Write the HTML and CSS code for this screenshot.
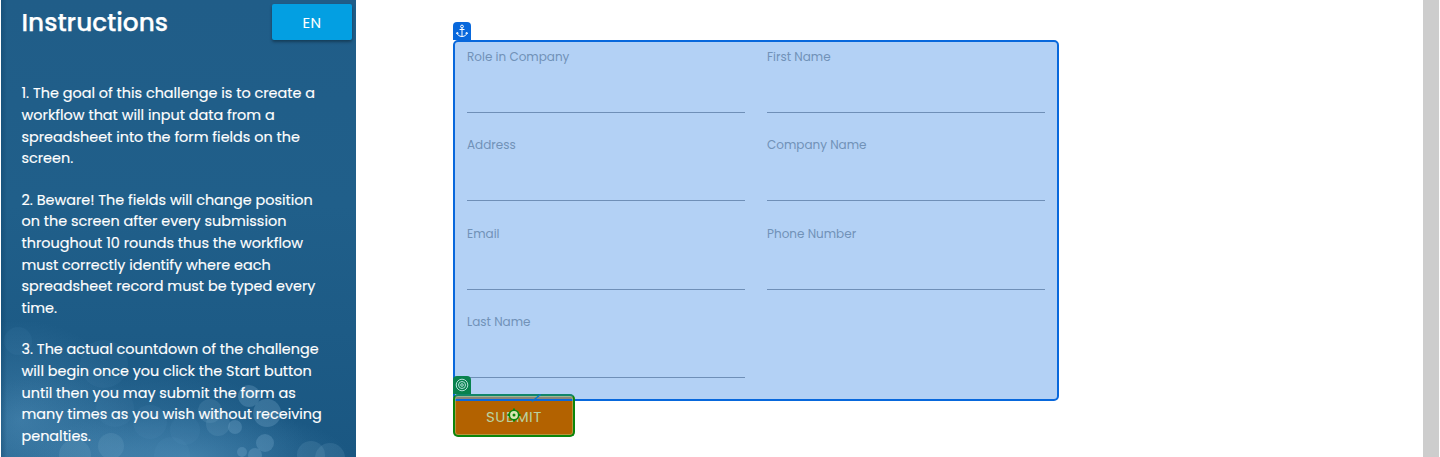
FILE: index.html
```html
<!DOCTYPE html>
<html lang="en">
<head>
<meta charset="utf-8">
<title>Challenge</title>
<link rel="stylesheet" href="styles.css">
</head>
<body>
<div class="page">
  <aside class="side">
    <svg class="bokeh" width="355" height="457" viewBox="1 0 355 457" aria-hidden="true">
      <defs>
        <radialGradient id="glow"><stop offset="0" stop-color="#5b9ac4" stop-opacity=".45"/><stop offset=".5" stop-color="#5292bd" stop-opacity=".24"/><stop offset="1" stop-color="#5292bd" stop-opacity="0"/></radialGradient>
        <linearGradient id="edge"><stop offset="0" stop-color="#0b3d63" stop-opacity=".35"/><stop offset="1" stop-color="#0b3d63" stop-opacity="0"/></linearGradient>
      </defs>
      <ellipse cx="20" cy="420" rx="110" ry="100" fill="url(#glow)"/>
      <ellipse cx="120" cy="455" rx="190" ry="90" fill="url(#glow)"/>
      <ellipse cx="190" cy="458" rx="160" ry="50" fill="url(#glow)"/>
      <g fill="#74acd0" fill-opacity=".07">
        <circle cx="18" cy="341" r="14"/><circle cx="104" cy="364" r="24"/><circle cx="115" cy="408" r="19"/>
        <circle cx="150" cy="422" r="17"/><circle cx="185" cy="430" r="15"/><circle cx="172" cy="455" r="18"/>
      </g>
      <g fill="#8dbada" fill-opacity=".15">
        <circle cx="210" cy="411" r="12"/><circle cx="218" cy="424" r="12"/><circle cx="75" cy="455" r="16"/>
        <circle cx="111" cy="446" r="13"/><circle cx="311" cy="455" r="14"/><circle cx="330" cy="458" r="15"/>
      </g>
      <g fill="#8dbada" fill-opacity=".25">
        <circle cx="249" cy="396" r="11"/><circle cx="267" cy="413" r="14"/><circle cx="235" cy="427" r="7"/>
        <circle cx="265" cy="443" r="9"/><circle cx="242" cy="452" r="5"/><circle cx="255" cy="455" r="7"/>
      </g>
      <rect x="1" width="6" height="457" fill="url(#edge)"/>
    </svg>
    <div class="side-body">
      <header class="side-head">
        <h1>Instructions</h1>
        <button class="lang">EN</button>
      </header>
      <div class="steps">
        <p>1. The goal of this challenge is to create a<br>workflow that will input data from a<br>spreadsheet into the form fields on the<br>screen.</p>
        <p>2. Beware! The fields will change position<br>on the screen after every submission<br>throughout 10 rounds thus the workflow<br>must correctly identify where each<br>spreadsheet record must be typed every<br>time.</p>
        <p>3. The actual countdown of the challenge<br>will begin once you click the Start button<br>until then you may submit the form as<br>many times as you wish without receiving<br>penalties.</p>
      </div>
    </div>
  </aside>
  <main class="content">
    <div class="form-wrap">
      <form class="form">
        <label class="field">Role in Company</label><label class="field">First Name</label>
        <label class="field">Address</label><label class="field">Company Name</label>
        <label class="field">Email</label><label class="field">Phone Number</label>
        <label class="field">Last Name</label>
      </form>
      <div class="submit">SUBMIT</div>
      <span class="tag anchor"><svg width="18" height="18" viewBox="0 0 18 18" fill="none" stroke="#fff"><circle cx="9" cy="4.500" r="1.400"/><path d="M9 6v8.500M6.500 7.500h5M4 10.500c.3 2.500 2 3.900 5 4 3-.1 4.700-1.500 5-4M3.500 12l.6-1.500 1.500.8M14.500 12l-.6-1.500-1.500.8"/></svg></span>
      <span class="tag target"><svg width="18" height="18" viewBox="0 0 18 18" fill="none" stroke="#b4e0d8"><circle cx="9" cy="9" r="5.800"/><circle cx="9" cy="9" r="3.500"/><circle cx="9" cy="9" r="1.300"/></svg></span>
      <svg class="marks" width="122" height="48" viewBox="0 0 122 48" fill="none"><path d="M79 8.500l8.500-7" stroke="#0878c8" stroke-width="1.500"/><circle cx="61" cy="22" r="4.700" fill="#d8e5b4" stroke="#0b860b" stroke-width="1.600"/><circle cx="61" cy="22" r="1.500" fill="#0b860b"/><path d="M61 15.500v2M61 26.500v2M54.500 22h2M65.500 22h2" stroke="#0b860b" stroke-width="2"/></svg>
    </div>
  </main>
  <div class="scroll"></div>
</div>
</body>
</html>
```
FILE: styles.css
```css
* { box-sizing: border-box; }
body { margin: 0; background: #fff; font-family: Poppins, Inter, "Open Sans", sans-serif; overflow: hidden; }
.page { display: flex; height: 457px; padding: 0 1px; }
.side { position: relative; width: 355px; flex: none; overflow: hidden; color: #fff; background: linear-gradient(#205d88, #205f8a 45%, #1a5782); }
.bokeh { position: absolute; left: 0; top: 0; }
.side-body { position: relative; padding: 4px 4px 0 20.500px; }
.side-head { display: flex; justify-content: space-between; height: 79.400px; }
h1 { margin: 0; font-size: 24.800px; font-weight: 500; line-height: 37px; -webkit-text-stroke: .25px #fff; }
.lang { width: 80px; height: 36px; padding: 0; border: 0; border-radius: 2px; background: #039fe2; color: #fff; font: 400 15px/37px Poppins, Inter, sans-serif; letter-spacing: .5px; box-shadow: 0 2px 3px rgba(0,0,0,.35); }
.steps { font-size: 14.400px; line-height: 21.600px; white-space: nowrap; -webkit-text-stroke: .15px #fff; }
.steps p { margin: 0 0 20px; }
.content { flex: 1; padding: 40px 0 0 97px; }
.form-wrap { position: relative; width: 606px; }
.form { display: grid; grid-template-columns: 278px 278px; grid-auto-rows: 88.300px; column-gap: 22px; width: 606px; height: 361px; padding: 0 12px; border: 2px solid #0868dc; border-radius: 5px; background: #b3d1f5; }
.field { height: 71px; padding-top: 6px; border-bottom: 1px solid #6f8fb7; font-size: 12px; line-height: 18px; color: #7192b8; }
.submit { width: 122px; height: 43px; margin-top: -7px; border: 2px solid #0b860b; border-top-color: #12866a; border-radius: 5px; background: linear-gradient(#7fa39b 0 1px, #8a8578 1px 3px, #0868dc 3px 5px, #b36200 5px); box-shadow: inset 0 0 0 1px rgba(190,210,130,.45); color: #bad2a0; text-align: center; font-size: 15px; line-height: 41px; letter-spacing: .5px; }
.tag { position: absolute; left: 0; width: 18px; height: 18px; border-radius: 4px 4px 0 0; }
.tag svg, .marks { display: block; }
.anchor { top: -18px; background: #0868dc; }
.target { top: 336px; background: #08824e; }
.marks { position: absolute; left: 0; top: 353px; }
.scroll { width: 16px; background: #cdcdcd; }
```
